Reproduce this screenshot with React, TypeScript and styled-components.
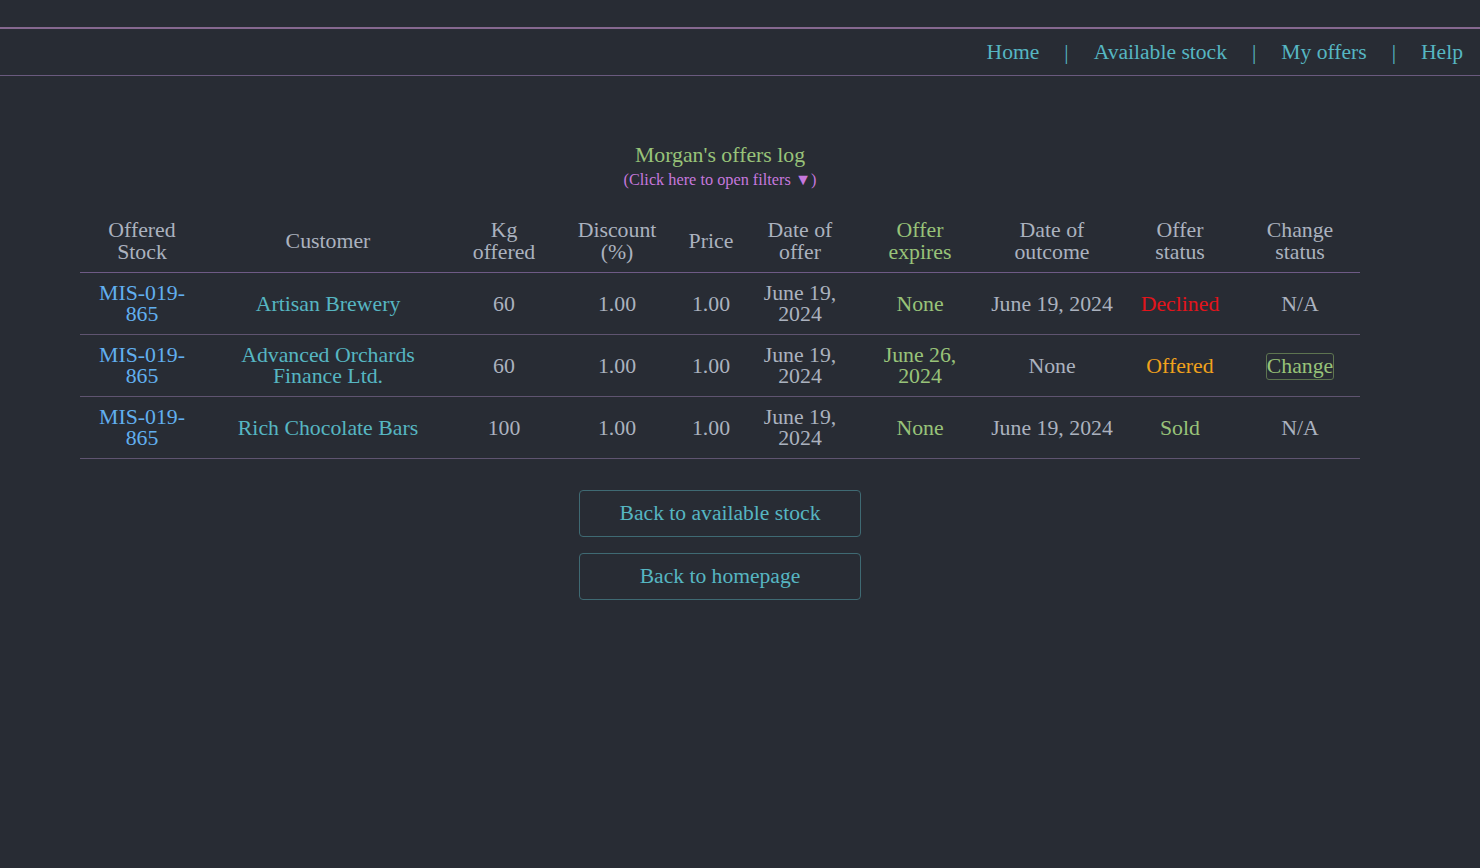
import React from "react";
import styled, {createGlobalStyle} from "styled-components";

const serif = `"Liberation Serif", Tinos, "Times New Roman", Times, serif`;
const baseSize = "21.8px";

const GlobalStyle = createGlobalStyle`
  html, body {
    margin: 0;
    padding: 0;
    background: #282c34;
    font-family: ${serif};
    color: #abb2bf;
  }
  table, button {
    font-family: ${serif};
  }
`;

type Row = {
  customer: string;
  kg: number;
  expires: string;
  outcome: string;
  status: "Declined" | "Offered" | "Sold";
};

const rows: Row[] = [
  {customer: "Artisan Brewery", kg: 60, expires: "None", outcome: "June 19, 2024", status: "Declined"},
  {customer: "Advanced Orchards Finance Ltd.", kg: 60, expires: "June 26, 2024", outcome: "None", status: "Offered"},
  {customer: "Rich Chocolate Bars", kg: 100, expires: "None", outcome: "June 19, 2024", status: "Sold"},
];

const columns = [
  {label: ["Offered", "Stock"], width: 124},
  {label: ["Customer"], width: 248},
  {label: ["Kg", "offered"], width: 104},
  {label: ["Discount", "(%)"], width: 122},
  {label: ["Price"], width: 66},
  {label: ["Date of", "offer"], width: 112},
  {label: ["Offer", "expires"], width: 128, accent: true},
  {label: ["Date of", "outcome"], width: 136},
  {label: ["Offer", "status"], width: 120},
  {label: ["Change", "status"], width: 120},
];

const statusColors = {
  Declined: "#e3141b",
  Offered: "#f0a21c",
  Sold: "#98c379",
};

// splits "June 19, 2024" into two lines like the narrow columns do
const twoLines = (text: string, at: string) => {
  const i = text.indexOf(at);
  if (i < 0) return text;
  return <>{text.slice(0, i + at.length).trim()}<br />{text.slice(i + at.length).trim()}</>;
};

export default function App() {
  return (
    <Page>
      <GlobalStyle />
      <NavBar>
        <NavLink>Home</NavLink>
        <Separator>|</Separator>
        <NavLink>Available stock</NavLink>
        <Separator>|</Separator>
        <NavLink>My offers</NavLink>
        <Separator>|</Separator>
        <NavLink>Help</NavLink>
      </NavBar>
      <Main>
        <Title>Morgan's offers log</Title>
        <FilterToggle>(Click here to open filters ▼)</FilterToggle>
        <OffersTable>
          <colgroup>
            {columns.map(c => <col key={c.label.join()} style={{width: c.width}} />)}
          </colgroup>
          <thead>
            <tr>
              {columns.map(c => (
                <HeadCell key={c.label.join()} accent={c.accent}>
                  {c.label.length > 1 ? <>{c.label[0]}<br />{c.label[1]}</> : c.label[0]}
                </HeadCell>
              ))}
            </tr>
          </thead>
          <tbody>
            {rows.map((r, i) => (
              <BodyRow key={i}>
                <Cell><StockLink>MIS-019-<br />865</StockLink></Cell>
                <Cell><CustomerLink>{twoLines(r.customer, "Orchards")}</CustomerLink></Cell>
                <Cell>{r.kg}</Cell>
                <Cell>1.00</Cell>
                <Cell>1.00</Cell>
                <Cell>{twoLines("June 19, 2024", ",")}</Cell>
                <Cell accent>{twoLines(r.expires, ",")}</Cell>
                <Cell>{r.outcome}</Cell>
                <Cell style={{color: statusColors[r.status]}}>{r.status}</Cell>
                <Cell>{r.status === "Offered" ? <ChangeButton>Change</ChangeButton> : "N/A"}</Cell>
              </BodyRow>
            ))}
          </tbody>
        </OffersTable>
        <Actions>
          <ActionButton>Back to available stock</ActionButton>
          <ActionButton>Back to homepage</ActionButton>
        </Actions>
      </Main>
    </Page>
  );
}

const Page = styled.div`
  min-height: 868px;
  padding-top: 27px;
`;

const NavBar = styled.nav`
  display: flex;
  justify-content: flex-end;
  align-items: center;
  height: 46px;
  padding-right: 17px;
  border-top: 2px solid #85688f;
  border-bottom: 1px solid #6a5a7e;
  font-size: 21.6px;
`;

const NavLink = styled.a`
  color: #56b6c2;
  cursor: pointer;
`;

const Separator = styled.span`
  color: #56b6c2;
  margin: 0 25px;
`;

const Main = styled.main`
  width: 1440px;
  display: flex;
  flex-direction: column;
  align-items: center;
  padding-top: 67px;
`;

const Title = styled.div`
  color: #98c379;
  font-size: ${baseSize};
  line-height: 24px;
`;

const FilterToggle = styled.div`
  color: #c678dd;
  font-size: 16.3px;
  line-height: 25px;
  cursor: pointer;
`;

const OffersTable = styled.table`
  width: 1280px;
  margin-top: 19px;
  border-collapse: collapse;
  table-layout: fixed;
  font-size: ${baseSize};
`;

const HeadCell = styled.th<{accent?: boolean}>`
  font-weight: normal;
  line-height: 22px;
  padding: 8px 2px 9px;
  text-align: center;
  color: ${p => p.accent ? "#98c379" : "#abb2bf"};
  border-bottom: 1px solid #6e5a85;
`;

const BodyRow = styled.tr`
  border-bottom: 1px solid #5f5470;
`;

const Cell = styled.td<{accent?: boolean}>`
  line-height: 21px;
  padding: 10px 2px 9px;
  text-align: center;
  color: ${p => p.accent ? "#98c379" : "#abb2bf"};
`;

const StockLink = styled.a`
  color: #61afef;
  cursor: pointer;
`;

const CustomerLink = styled.a`
  color: #56b6c2;
  cursor: pointer;
`;

const ChangeButton = styled.button`
  font-size: ${baseSize};
  line-height: 23px;
  color: #98c379;
  background: transparent;
  border: 1px solid #5d7450;
  border-radius: 3px;
  padding: 1px 0;
  cursor: pointer;
`;

const Actions = styled.div`
  display: flex;
  flex-direction: column;
  gap: 16px;
  margin-top: 31px;
`;

const ActionButton = styled.button`
  width: 282px;
  height: 47px;
  font-size: 21.6px;
  color: #56b6c2;
  background: transparent;
  border: 1px solid #3f6a73;
  border-radius: 4px;
  cursor: pointer;
`;
